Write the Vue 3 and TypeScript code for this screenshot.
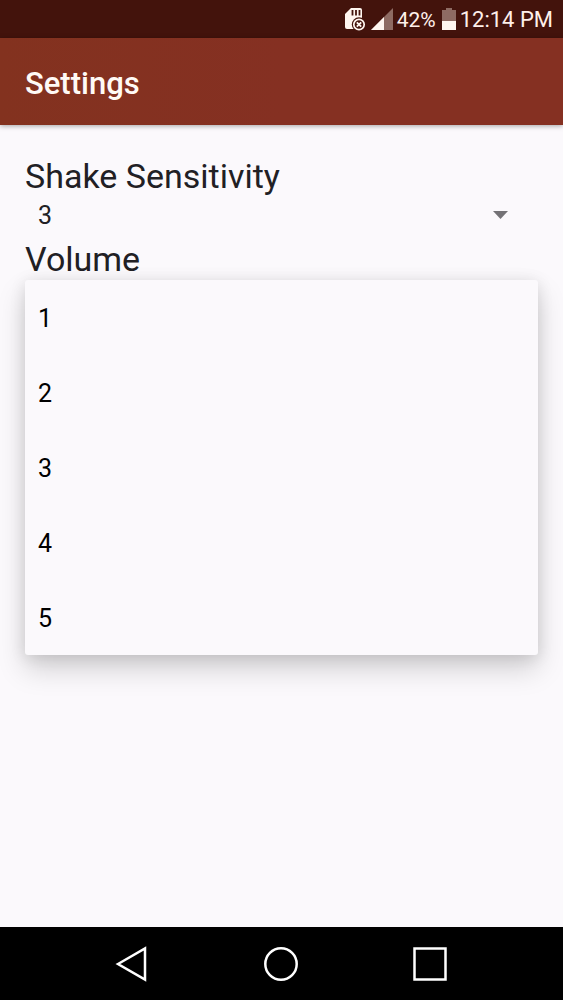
<script setup lang="ts">
import { ref } from 'vue'

const levels: number[] = [1, 2, 3, 4, 5]
const sensitivity = ref<number>(3)
const menuOpen = ref<boolean>(true)

function toggleMenu(): void {
  menuOpen.value = !menuOpen.value
}

function choose(level: number): void {
  sensitivity.value = level
  menuOpen.value = false
}
</script>

<template>
  <div class="screen">
    <div class="status-bar">
      <svg class="sd-card" width="21" height="24" viewBox="0 0 21 24" aria-hidden="true">
        <path d="M6 1h9a2 2 0 0 1 2 2v19H2a2 2 0 0 1-2-2V7z" fill="#fff6f0" />
        <path d="M7.500 3v5.500M11 3v5.500M14.500 3v5.500" stroke="#43130c" stroke-width="1.800" />
        <circle cx="14" cy="17.500" r="7.200" fill="#43130c" />
        <circle cx="14" cy="17.500" r="5.200" fill="none" stroke="#fff6f0" stroke-width="1.700" />
        <path d="M11.800 15.300l4.400 4.400M16.200 15.300l-4.400 4.400" stroke="#fff6f0" stroke-width="1.800" />
      </svg>
      <svg class="signal" width="22" height="22" viewBox="0 0 22 22" aria-hidden="true">
        <path d="M22 0v22H0z" fill="#8e6b63" />
        <path d="M13 9v13H0z" fill="#fff6f0" />
      </svg>
      <span class="percent">42%</span>
      <svg class="battery" width="14" height="22" viewBox="0 0 14 22" aria-hidden="true">
        <path d="M4 0h6v2h4v11H0V2h4z" fill="#8e6b63" />
        <path d="M0 13h14v9H0z" fill="#fff6f0" />
      </svg>
      <span class="clock">12:14 PM</span>
    </div>

    <header class="app-bar">
      <h1>Settings</h1>
    </header>

    <main class="content">
      <label for="sensitivity">Shake Sensitivity</label>
      <div class="spinner">
        <select
          id="sensitivity"
          v-model="sensitivity"
          @mousedown.prevent="toggleMenu"
        >
          <option v-for="level in levels" :key="level" :value="level">{{ level }}</option>
        </select>
        <svg class="arrow" width="15" height="8" viewBox="0 0 15 8" aria-hidden="true">
          <path d="M0 0h15L7.500 8z" fill="#747276" />
        </svg>
      </div>
      <div class="volume">
        <span class="heading">Volume</span>
        <ul v-if="menuOpen" class="menu" aria-label="Shake Sensitivity">
          <li v-for="level in levels" :key="level">
            <button type="button" @click="choose(level)">{{ level }}</button>
          </li>
        </ul>
      </div>
    </main>

    <nav class="nav-bar" aria-label="System">
      <button type="button" aria-label="Back">
        <svg width="36" height="36" viewBox="0 0 36 36">
          <path d="M4 18L31 2.500v31z" />
        </svg>
      </button>
      <button type="button" aria-label="Home">
        <svg width="36" height="36" viewBox="0 0 36 36">
          <circle cx="18" cy="18" r="15.700" />
        </svg>
      </button>
      <button type="button" aria-label="Recent apps">
        <svg width="36" height="36" viewBox="0 0 36 36">
          <path d="M2.500 2.500h31v31h-31z" />
        </svg>
      </button>
    </nav>
  </div>
</template>

<style>
body {
  margin: 0;
  background: #fbf9fc;
}
</style>

<style scoped>
.screen {
  display: flex;
  flex-direction: column;
  min-height: 100vh;
  background: #fbf9fc;
  color: #212024;
  font-family: Roboto, "Liberation Sans", sans-serif;
}

.status-bar {
  display: flex;
  align-items: center;
  justify-content: flex-end;
  height: 38px;
  padding-right: 10px;
  background: #43130c;
  color: #fff0ea;
  line-height: 38px;
}

.signal {
  margin: 0 4px 0 5px;
}

.percent {
  padding-top: 2px;
  font-size: 21px;
}

.battery {
  margin: 0 4px 0 6px;
}

.clock {
  padding-top: 2px;
  font-size: 22px;
}

.app-bar {
  display: flex;
  align-items: center;
  height: 87px;
  padding: 0 25px;
  background: linear-gradient(90deg, #83321f, #853022 50%);
  box-shadow: 0 1px 5px rgba(0, 0, 0, 0.35);
}

h1 {
  margin: 0;
  padding-top: 3px;
  color: #fffaf6;
  font-size: 31px;
  font-weight: 500;
}

.content {
  flex: 1;
  padding: 30px 25px;
}

.content label,
.heading {
  display: block;
  font-size: 34px;
  line-height: 42px;
}

.spinner {
  display: flex;
  box-sizing: border-box;
  align-items: center;
  height: 41px;
  padding: 0 30px 5px 0;
}

select {
  flex: 1;
  height: 36px;
  margin: 0;
  padding: 0 13px;
  border: 0;
  outline: 0;
  appearance: none;
  background: transparent;
  color: inherit;
  font: 25px Roboto, "Liberation Sans", sans-serif;
}

.volume {
  position: relative;
}

.menu {
  position: absolute;
  top: 100%;
  right: 0;
  left: 0;
  margin: 0;
  padding: 0;
  border-radius: 3px;
  background: #fbf9fc;
  box-shadow: 0 14px 28px rgba(0, 0, 0, 0.17), 0 2px 16px rgba(0, 0, 0, 0.11);
  list-style: none;
}

.menu button {
  display: block;
  width: 100%;
  height: 75px;
  padding: 2px 13px 0;
  border: 0;
  background: transparent;
  color: #000;
  font: 25px Roboto, "Liberation Sans", sans-serif;
  text-align: left;
}

.nav-bar {
  display: flex;
  align-items: center;
  justify-content: center;
  gap: 113px;
  height: 73px;
  padding-right: 2px;
  background: #000;
}

.nav-bar button {
  display: flex;
  padding: 0;
  border: 0;
  background: transparent;
}

.nav-bar svg {
  fill: none;
  stroke: #fff;
  stroke-width: 2.5;
}
</style>
